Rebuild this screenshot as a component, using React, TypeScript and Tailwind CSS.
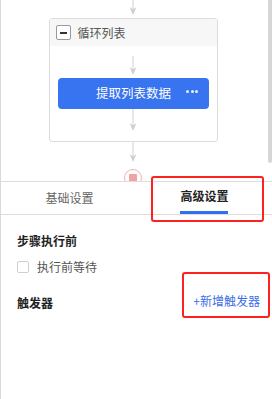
import React from 'react';

function Arrow({ h, top = 0, tip }: { h: number; top?: number; tip: number }) {
  // vertical connector with concave arrowhead
  return (
    <svg width="12" height={h} className="block shrink-0">
      <line x1="6" y1={top} x2="6" y2={tip - 3} stroke="#cfcfcf" strokeWidth="1" />
      <path d={`M2.5 ${tip - 8} L6 ${tip} L9.5 ${tip - 8} L6 ${tip - 5.5} Z`} fill="#cfcfcf" />
    </svg>
  );
}

export default function App() {
  return (
    <div
      className="relative w-[272px] h-[399px] overflow-hidden bg-white border-l border-[#d9d9d9] text-[12px]"
      style={{ fontFamily: '"Noto Sans CJK SC", "Noto Sans", sans-serif' }}
    >
      {/* canvas */}
      <div className="flex h-[181px] overflow-hidden">
        <div className="w-[264px] flex flex-col items-center">
          <Arrow h={18} tip={15} />
          <div className="w-[169px] border border-[#dcdcdc] rounded-[3px] bg-white">
            <div className="h-[27px] bg-[#f7f7f7] flex items-center pl-[6px] gap-[7px]">
              <div className="w-[15px] h-[15px] border border-[#9a9a9a] rounded-[2px] bg-white flex items-center justify-center">
                <div className="w-[7px] h-[2px] bg-[#333]" />
              </div>
              <span className="text-[#555] leading-none">循环列表</span>
            </div>
            <div className="flex flex-col items-center pt-[10px]">
              <Arrow h={22} tip={19} />
              <div className="relative w-[151px] h-[31px] rounded-[4px] bg-[#3873f0] flex items-center justify-center text-white text-[12.5px] ml-[1px]">
                <span className="leading-none">提取列表数据</span>
                <span className="absolute right-[11px] top-[12px] flex gap-[1.5px]">
                  <span className="w-[3px] h-[3px] rounded-full bg-white/90" />
                  <span className="w-[3px] h-[3px] rounded-full bg-white/90" />
                  <span className="w-[3px] h-[3px] rounded-full bg-white/90" />
                </span>
              </div>
              <Arrow h={32} tip={22} />
            </div>
          </div>
          <Arrow h={27} tip={20} />
          <div className="w-[18px] h-[18px] rounded-full border-[1.5px] border-[#f2b3b3] flex items-start justify-center pt-[3.5px] shrink-0">
            <div className="w-[8px] h-[8px] bg-[#f0a3a3] rounded-[1px]" />
          </div>
        </div>
        <div className="ml-auto w-[4px] h-[163px] bg-[#d6d6d6] rounded-b-[2px]" />
      </div>

      {/* settings panel */}
      <div className="border-t border-[#dedede]">
        <div className="flex h-[33px] border-b border-[#dedede] pl-[1px]">
          <div className="w-[137px] flex items-center justify-center text-[#666]">基础设置</div>
          <div className="w-[137px] flex items-end justify-center">
            <div className="flex flex-col items-center">
              <span className="text-[#222] font-semibold leading-none mb-[9px]">高级设置</span>
              <div className="w-[48px] h-[3px] bg-[#3370f0]" />
            </div>
          </div>
        </div>
        <div className="px-4 pt-[20px]">
          <div className="font-bold text-[#222] leading-none">步骤执行前</div>
          <div className="flex items-center gap-[8px] mt-[14px]">
            <div className="w-[12px] h-[12px] border border-[#cfcfcf] rounded-[2px]" />
            <span className="text-[#555] leading-none">执行前等待</span>
          </div>
          <div className="flex items-center justify-between mt-[19px] -mr-[4px]">
            <span className="font-bold text-[#222] leading-none mt-[5px]">触发器</span>
            <span className="text-[#3b6de8] leading-none">+新增触发器</span>
          </div>
        </div>
      </div>

      {/* annotation boxes */}
      <div className="absolute left-[150px] top-[176px] w-[113px] h-[46px] border-[2.5px] border-[#ff2020] rounded-[3px]" />
      <div className="absolute left-[181px] top-[272px] w-[88px] h-[46px] border-[2.5px] border-[#ff2020] rounded-[3px]" />
    </div>
  );
}
